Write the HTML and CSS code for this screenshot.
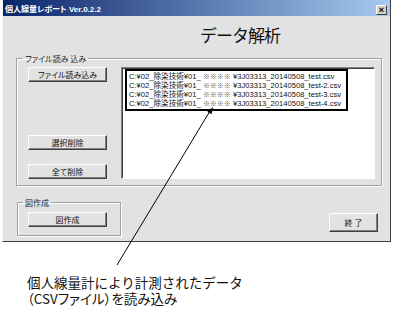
FILE: index.html
```html
<!DOCTYPE html>
<html lang="ja">
<head>
    <meta charset="UTF-8">
    <title>個人線量レポート</title>
    <link rel="stylesheet" href="styles.css">
</head>
<body>
    <div class="window">
        <div class="titlebar">
            <span class="title">個人線量レポート Ver.0.2.2</span>
            <span class="close">×</span>
        </div>
        <div class="content">
            <h1 class="heading">データ解析</h1>

            <fieldset class="group group-files">
                <legend>ファイル読み 込み</legend>
                <div class="file-buttons">
                    <button class="btn">ファイル読み込み</button>
                    <div class="btn-pair">
                        <button class="btn">選択削除</button>
                        <button class="btn">全て削除</button>
                    </div>
                </div>
                <div class="listbox">
                    <div class="selection">
                        <div class="item">C:¥02_除染技術¥01_ <span class="mask">※※※※</span> ¥3J03313_20140508_test.csv</div>
                        <div class="item">C:¥02_除染技術¥01_ <span class="mask">※※※※</span> ¥3J03313_20140508_test-2.csv</div>
                        <div class="item">C:¥02_除染技術¥01_ <span class="mask">※※※※</span> ¥3J03313_20140508_test-3.csv</div>
                        <div class="item">C:¥02_除染技術¥01_ <span class="mask">※※※※</span> ¥3J03313_20140508_test-4.csv</div>
                    </div>
                </div>
            </fieldset>

            <div class="bottom-row">
                <fieldset class="group group-chart">
                    <legend>図作成</legend>
                    <button class="btn">図作成</button>
                </fieldset>
                <button class="btn btn-exit">終 了</button>
            </div>
        </div>
    </div>

    <p class="caption">個人線量計により計測されたデータ<br><span class="palt">（CSVファイル）を読み込み</span></p>

    <!-- annotation arrow pointing at the file list -->
    <svg class="annotation" width="400" height="313" viewBox="0 0 400 313">
        <line x1="117" y1="265" x2="210" y2="111" stroke="#000" stroke-width="1"/>
        <polygon points="213,107 211.5,114.3 207.3,111.7" fill="#000"/>
    </svg>
</body>
</html>
```

FILE: styles.css
```css
body {
    margin: 0;
    background: #fff;
    font-family: "Noto Sans CJK JP", sans-serif;
    position: relative;
    width: 400px;
    height: 313px;
    overflow: hidden;
}

.window {
    margin-left: 2px;
    width: 389px;
    box-sizing: border-box;
    background: #e2e2e2;
    border: 1px solid;
    border-color: #f4f4f4 #404040 #404040 #f4f4f4;
    border-top: none;
}

.titlebar {
    height: 16px;
    background: linear-gradient(to right, #0a246a, #a6caf0);
    display: flex;
    align-items: center;
    justify-content: space-between;
    padding: 0 3px 0 2px;
}

.title {
    color: #fff;
    font-family: "Liberation Sans", "Noto Sans CJK JP", sans-serif;
    font-weight: bold;
    font-size: 8px;
    font-feature-settings: "palt";
}

.close {
    width: 9px;
    height: 8px;
    margin-top: 4px;
    background: #d4d0c8;
    border: 1px solid;
    border-color: #fff #404040 #404040 #fff;
    font-family: "Liberation Sans", sans-serif;
    font-size: 9px;
    font-weight: bold;
    line-height: 8px;
    text-align: center;
    color: #000;
}

.content {
    padding: 0 8px 5px 13px;
}

.heading {
    margin: 9px 0 0 184px;
    font-size: 17px;
    line-height: 20px;
    font-weight: normal;
    letter-spacing: -1px;
    color: #111;
}

.group {
    margin: 0;
    border: 1px solid #a0a0a0;
    box-shadow: 1px 1px 0 #fff, inset 1px 1px 0 #fff;
}

.group legend {
    margin-left: -5px;
    padding: 0 2px;
    font-size: 8px;
    line-height: 11px;
    color: #222;
    font-feature-settings: "palt";
}

.group-files {
    margin-top: 8px;
    padding: 3px 6px 6px 11px;
    display: grid;
    grid-template-columns: 79px 1fr;
    gap: 14px;
}

.file-buttons {
    display: flex;
    flex-direction: column;
    justify-content: space-between;
}

.btn-pair {
    display: flex;
    flex-direction: column;
    gap: 14px;
}

.btn {
    width: 79px;
    height: 15px;
    padding: 0;
    background: #e2e2e2;
    border: 1px solid;
    border-color: #fff #404040 #404040 #fff;
    box-shadow: inset -1px -1px 0 #808080;
    font-family: "Noto Sans CJK JP", sans-serif;
    font-size: 8px;
    line-height: 12px;
    color: #111;
    font-feature-settings: "palt";
}

.listbox {
    height: 112px;
    box-sizing: border-box;
    background: #fff;
    border: 1px solid;
    border-color: #808080 #fff #fff #808080;
    box-shadow: inset 1px 1px 0 #404040;
    padding: 1px 0 0 3px;
}

.selection {
    width: 223px;
    box-sizing: border-box;
    border: 2px solid #000;
    padding: 1px 2px;
}

.item {
    font-family: "Liberation Sans", "Noto Sans CJK JP", sans-serif;
    font-size: 7.6px;
    line-height: 8px;
    white-space: nowrap;
    color: #111;
}

.mask {
    font-family: "Noto Sans CJK JP", sans-serif;
    font-size: 7px;
    color: #555;
}

.bottom-row {
    margin-top: 11px;
    display: flex;
    justify-content: space-between;
    align-items: flex-end;
}

.group-chart {
    margin-left: 1px;
    padding: 4px 13px 8px 10px;
    display: flex;
}

.btn-exit {
    width: 49px;
    height: 19px;
    margin: 0 4px 4px 0;
}

.caption {
    margin: 32px 0 0;
    padding-left: 27px;
    font-size: 13.5px;
    line-height: 16px;
    color: #111;
}

.palt {
    font-feature-settings: "palt";
}

.annotation {
    position: absolute;
    left: 0;
    top: 0;
    pointer-events: none;
}
```
